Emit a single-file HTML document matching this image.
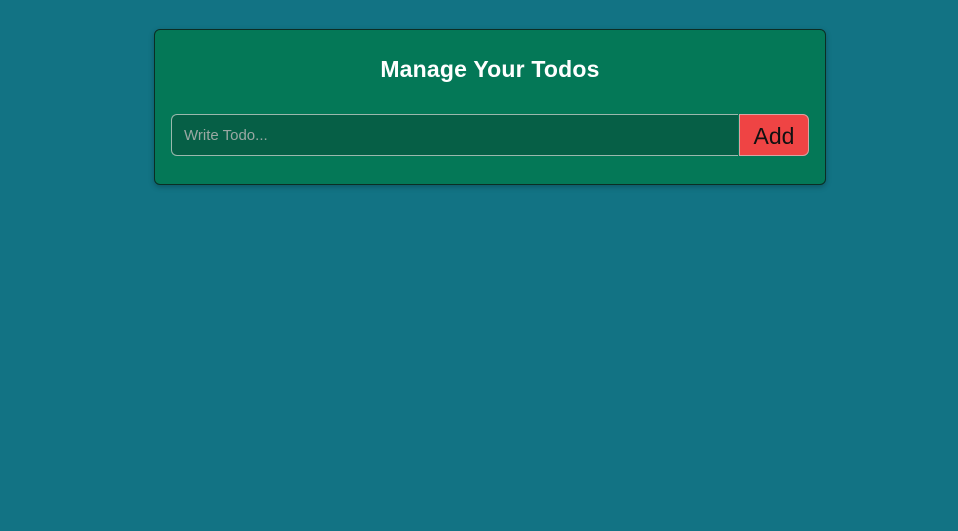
<!DOCTYPE html>
<html><head><style>
body{margin:0;background:#127384;width:958px;height:531px;font-family:"Liberation Sans",sans-serif;}
.card{position:absolute;left:154px;top:29px;width:670px;height:154px;background:#047857;border:1px solid #0b2e24;border-radius:6px;box-shadow:0 2px 6px rgba(0,0,0,.25);}
h1{position:absolute;top:26px;left:0;right:0;margin:0;text-align:center;color:#fff;font-size:23px;font-weight:bold;letter-spacing:0.2px;}
.in{position:absolute;left:16px;top:84px;width:567px;height:42px;background:#065f46;border:1px solid #9bb8ad;border-right:none;border-radius:6px 0 0 6px;color:#9aa8a3;font-size:15px;line-height:42px;padding-left:12px;box-sizing:border-box;}
.btn{position:absolute;left:584px;top:84px;width:70px;height:42px;background:#ef4444;border:1px solid #d9a3a3;border-radius:0 6px 6px 0;box-sizing:border-box;color:#111;font-size:23px;text-align:center;line-height:42px;}
</style></head><body>
<div class="card"><h1>Manage Your Todos</h1>
<div class="in">Write Todo...</div>
<div class="btn">Add</div></div>
</body></html>
